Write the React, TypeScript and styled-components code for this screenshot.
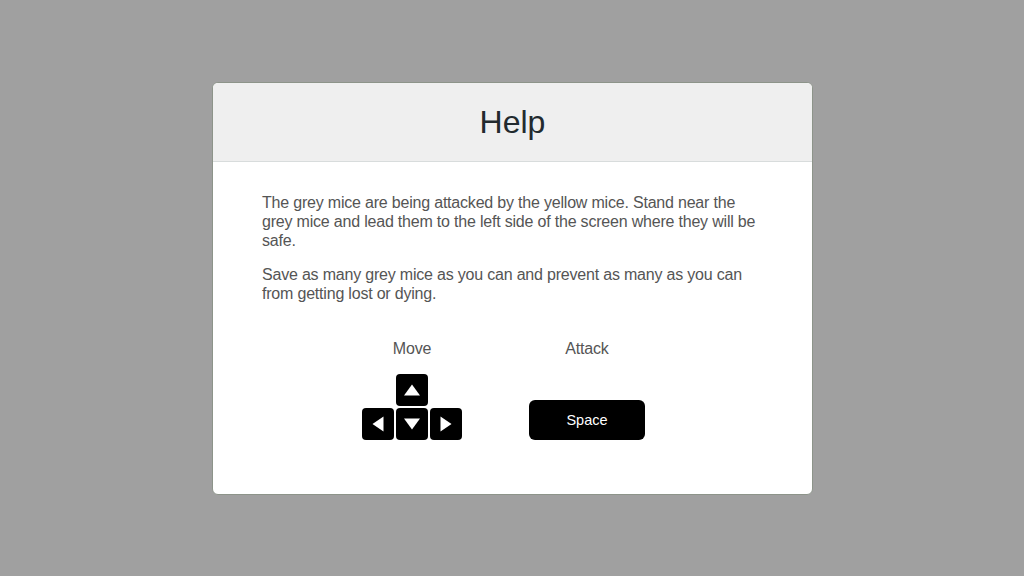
import styled, { createGlobalStyle } from 'styled-components';

const GlobalStyle = createGlobalStyle`
    html, body {
        margin: 0;
        padding: 0;
        background: #a0a0a0;
        font-family: "Liberation Sans", Arial, sans-serif;
    }
`;

type Dir = 'up' | 'down' | 'left' | 'right';

// triangles drawn in a 16x16 box
const arrowPoints: Record<Dir, string> = {
    up: '0,13.5 8,2.5 16,13.5',
    down: '0,2.5 16,2.5 8,13.5',
    left: '13.5,0.5 13.5,15.5 2.5,8',
    right: '2.5,0.5 2.5,15.5 13.5,8',
};

const Arrow = ({ dir }: { dir: Dir }) => (
    <svg width="16" height="16" viewBox="0 0 16 16">
        <polygon points={arrowPoints[dir]} fill="#fff" />
    </svg>
);

export default function App() {
    return (
        <>
            <GlobalStyle />
            <Screen>
                <Modal>
                    <Header>
                        <Title>Help</Title>
                    </Header>
                    <Body>
                        <Para>
                            The grey mice are being attacked by the yellow mice. Stand near the
                            grey mice and lead them to the left side of the screen where they will be
                            safe.
                        </Para>
                        <Para>
                            Save as many grey mice as you can and prevent as many as you can
                            from getting lost or dying.
                        </Para>
                        <Controls>
                            <Control>
                                <Label>Move</Label>
                                <KeyPad>
                                    <Key><Arrow dir="up" /></Key>
                                    <KeyRow>
                                        <Key><Arrow dir="left" /></Key>
                                        <Key><Arrow dir="down" /></Key>
                                        <Key><Arrow dir="right" /></Key>
                                    </KeyRow>
                                </KeyPad>
                            </Control>
                            <Control>
                                <Label>Attack</Label>
                                <SpaceKey>Space</SpaceKey>
                            </Control>
                        </Controls>
                    </Body>
                </Modal>
            </Screen>
        </>
    );
}

const Screen = styled.div`
    width: 1024px;
    height: 576px;
    padding: 82px 0 0 212px;
    box-sizing: border-box;
`;

const Modal = styled.div`
    width: 601px;
    height: 413px;
    box-sizing: border-box;
    background: #fff;
    border: 1px solid #8d948a;
    border-radius: 6px;
    overflow: hidden;
`;

const Header = styled.div`
    height: 78px;
    background: #efefef;
    border-bottom: 1px solid #d8dcdc;
    display: flex;
    align-items: center;
    justify-content: center;
`;

const Title = styled.h1`
    margin: 0;
    font-size: 32px;
    font-weight: normal;
    color: #222a2e;
`;

const Body = styled.div`
    padding: 31px 49px 0;
`;

const Para = styled.p`
    margin: 0 0 15px;
    font-size: 16px;
    line-height: 19px;
    letter-spacing: -0.2px;
    color: #555;
`;

const Controls = styled.div`
    display: flex;
    align-items: flex-start;
    gap: 67px;
    padding-left: 100px;
    margin-top: 36px;
`;

const Control = styled.div`
    display: flex;
    flex-direction: column;
    align-items: center;
`;

const Label = styled.div`
    font-size: 16px;
    line-height: 19px;
    letter-spacing: -0.2px;
    color: #555;
    margin-bottom: 16px;
`;

const KeyPad = styled.div`
    display: flex;
    flex-direction: column;
    align-items: center;
    gap: 2px;
`;

const KeyRow = styled.div`
    display: flex;
    gap: 2px;
`;

const Key = styled.div`
    width: 32px;
    height: 32px;
    background: #000;
    border-radius: 4px;
    display: flex;
    align-items: center;
    justify-content: center;
`;

const SpaceKey = styled.div`
    margin-top: 26px;
    width: 116px;
    height: 40px;
    background: #000;
    color: #fff;
    border-radius: 6px;
    display: flex;
    align-items: center;
    justify-content: center;
    font-size: 14.5px;
`;
